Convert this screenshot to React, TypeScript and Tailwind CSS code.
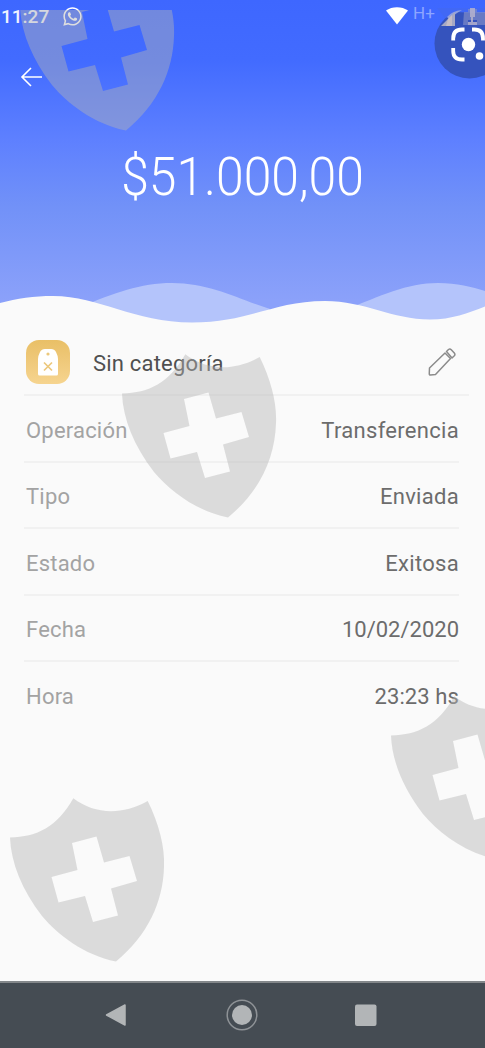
import { FaWhatsapp } from "react-icons/fa";

const details = [
  { label: "Operación", value: "Transferencia", tracking: "tracking-[0.3px]" },
  { label: "Tipo", value: "Enviada", tracking: "tracking-[0.3px]" },
  { label: "Estado", value: "Exitosa", tracking: "tracking-[0.3px]" },
  { label: "Fecha", value: "10/02/2020", tracking: "tracking-normal" },
  { label: "Hora", value: "23:23 hs", tracking: "tracking-[0.1px]" },
];

const Shield = ({ className }: { className: string }) => (
  <svg
    viewBox="0 0 156 166"
    className={`pointer-events-none absolute h-[166px] w-[156px] ${className}`}
  >
    <path
      fill="#b5b5b5"
      fillOpacity="0.44"
      fillRule="evenodd"
      d="M1 40.5C28 40 48 30 64.3 1.3C85 17 112 19 138.7 4C150 27 156 50 155 70C154 105 139 138 107 164.5C75 158 49 138 33 119C13 93 2 66 1 40.5ZM63 46L68.5 73L42.5 80L49.5 105.5L76 99L84 125L109 118.5L102 91.5L128 84L120.5 59L95 65.5L87.5 39.5Z"
    />
  </svg>
);

const LensButton = () => (
  <svg
    viewBox="0 0 120 100"
    className="absolute right-0 top-0 h-[100px] w-[120px]"
  >
    <path fill="#fff" d="M21 10.5C27 6 37 6 43 10.5L32 24.5Z" />
    <circle cx="104.5" cy="43.5" r="35" fill="#3553bd" />
    <path fill="#4168f5" d="M72 8H120V13H108L92 12L80 18Z" />
    <path fill="#8f9fe0" d="M82 17Q87 11 97 10L92 13L84 19Z" />
    <path fill="#a7a9c4" d="M76 26L90 12V26Z" />
    <path fill="#c5bcc5" d="M83 19L87 15V26H81Z" />
    <path
      fill="#7f8cc8"
      d="M99 12H103V9H112V12H120V25H112V20H103V25H98Z"
      opacity="0.7"
    />
    <path
      fill="#b5b3ce"
      d="M105 8H110V17H108V22H112V25H103V22H106V17H105Z"
      opacity="0.85"
    />
    <g fill="none" stroke="#fff" strokeWidth="3.8">
      <path d="M88.2 40.5V38.5Q88.2 29.5 97 29.5H99.5" />
      <path d="M107 29.5H109.5Q118 29.5 118 38.5V40.5" />
      <path d="M88.2 48V51Q88.2 59.5 97 59.5H99.5" />
    </g>
    <circle cx="103.5" cy="44.5" r="6.7" fill="#fff" />
    <circle cx="114.5" cy="56" r="3.8" fill="#fff" />
  </svg>
);

const Waves = () => (
  <svg
    viewBox="0 280 485 46"
    preserveAspectRatio="none"
    className="absolute bottom-0 left-0 h-[46px] w-full"
  >
    <path
      fill="#b4c4fb"
      d="M80 307C115 293 140 283 172 283C210 283 238 299 270 309L260 326H80ZM345 310C380 296 407 283 438 283C457 283 472 287 485 291V326H345Z"
    />
    <path
      fill="#fafafa"
      d="M0 303C17 298.500 34 296 53 296C100 296 133 322.500 192 322.500C250 322.500 273 301 325 301C365 301 392 319.500 430 319.500C452 319.500 468 313 485 306.500V326H0Z"
    />
  </svg>
);

const CategoryIcon = () => (
  <div className="mr-px flex size-11 items-center justify-center rounded-[13px] bg-gradient-to-b from-[#e9bf66] to-[#f6d48f]">
    <svg viewBox="0 0 22 28" className="h-7 w-[22px]">
      <path
        fill="#fff"
        d="M1 26V11Q1 8 3 4Q4.500 1 8 1H14Q17.500 1 19 4Q21 8 21 11V26Q21 27.500 19.500 27.500H2.500Q1 27.500 1 26Z"
      />
      <circle cx="11" cy="6" r="1.600" fill="#ecc87c" />
      <path
        d="M7 14.500L15 22.500M15 14.500L7 22.500"
        stroke="#ecc87c"
        strokeWidth="1.700"
      />
    </svg>
  </div>
);

const PencilIcon = () => (
  <svg
    viewBox="0 0 28 28"
    className="size-7"
    fill="none"
    stroke="#8b8b8b"
    strokeWidth="1.500"
    strokeLinejoin="round"
  >
    <path d="M1.500 20L17 5L22.500 10.500L7.500 26.500L2.500 27Q1 27 1.300 25Z" />
    <path d="M18.500 3.500L20.500 1.500Q22 .500 23.500 2L26.300 5Q27.500 6.500 26.300 7.800L24 10Z" />
  </svg>
);

const App = () => {
  return (
    <div className="relative flex h-[1048px] w-[485px] flex-col overflow-hidden bg-[#fafafa] font-['Roboto',sans-serif]">
      <header className="relative flex h-[326px] flex-col bg-[linear-gradient(to_bottom,#3e67ff_0px,#426bff_60px,#5e80ff_140px,#7191f8_205px,#8ba1fa_300px)] text-white">
        <div className="flex h-8 items-center pl-px">
          <span className="w-[61px] text-[19px] font-medium leading-none text-[#eef2ff]">
            11:27
          </span>
          <FaWhatsapp className="size-[21px]" />
          <span className="ml-[330px] pb-[6px] text-[17px] leading-none text-[#8da5ff]">
            H+
          </span>
        </div>
        <div className="flex h-[90px] items-center pl-5">
          <svg
            viewBox="0 0 22 20"
            className="h-5 w-[22px]"
            fill="none"
            stroke="currentColor"
            strokeWidth="1.600"
          >
            <path d="M22 10H2M11 1L2 10L11 19" />
          </svg>
        </div>
        <h1 className="flex h-[110px] scale-x-[0.94] items-center justify-center text-[53px] font-light leading-none">
          $51.000,00
        </h1>
        <Waves />
        <LensButton />
      </header>

      <main className="flex-1 pl-6">
        <div className="mr-4 flex h-[70px] items-center border-b-2 border-[#f1f1f1] pl-[2px] pt-[3px]">
          <CategoryIcon />
          <span className="ml-[22px] flex-1 pt-[3px] text-[22px] tracking-[0.2px] text-[#505050]">
            Sin categoría
          </span>
          <div className="mr-[13px]">
            <PencilIcon />
          </div>
        </div>
        <dl className="mr-[26px]">
          {details.map((item) => (
            <div
              key={item.label}
              className="flex h-[66.5px] items-center justify-between border-b-2 border-[#f1f1f1] pl-[2px] pt-1 text-[22px] last:border-b-0 last:pt-[2px]"
            >
              <dt className="tracking-[0.2px] text-[#a3a3a3]">{item.label}</dt>
              <dd className={`text-[#6c6c6c] ${item.tracking}`}>
                {item.value}
              </dd>
            </div>
          ))}
        </dl>
      </main>

      <nav className="flex h-[67px] items-center justify-center border-t-2 border-[#83878a] bg-[#454c53] pb-[2px] pr-px">
        <svg viewBox="0 0 300 36" className="h-9 w-[300px]">
          <path
            d="M14.500 18L33 8V28Z"
            fill="#b2b5b7"
            stroke="#b2b5b7"
            strokeWidth="1.500"
            strokeLinejoin="round"
          />
          <circle cx="150" cy="18" r="10" fill="#b2b5b7" />
          <circle
            cx="150"
            cy="18"
            r="14.800"
            fill="none"
            stroke="#8e9296"
            strokeWidth="1.500"
          />
          <rect x="263" y="7.500" width="21.500" height="21.500" rx="2" fill="#b2b5b7" />
        </svg>
      </nav>

      <div className="pointer-events-none absolute left-0 top-[10px] h-[130px] w-[200px] overflow-hidden">
        <Shield className="left-[19px] -top-[44px]" />
      </div>
      <Shield className="left-[121px] top-[353px]" />
      <Shield className="left-[390px] top-[695px]" />
      <Shield className="left-[9px] top-[797px]" />
    </div>
  );
};

export default App;
